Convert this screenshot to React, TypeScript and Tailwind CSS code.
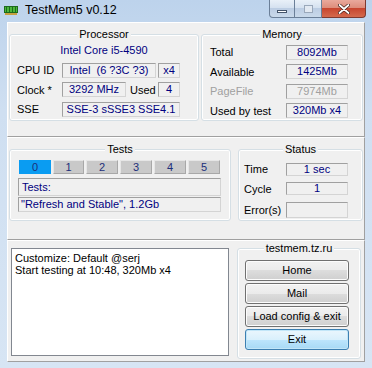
import React from 'react';

const font = { fontFamily: '"Liberation Sans", Arial, sans-serif' };

const Box = ({ w, h = 15, children, dim }: { w: number; h?: number; children?: React.ReactNode; dim?: boolean }) => (
  <div
    className={`flex items-center justify-center border border-t-[#a0a0a0] border-l-[#a0a0a0] border-b-[#d4d4d4] border-r-[#d4d4d4] bg-[#f0f0f0] text-[11px] leading-none ${dim ? 'text-[#a0a0a0]' : 'text-[#000080]'}`}
    style={{ width: w, height: h }}
  >
    {children}
  </div>
);

const Group = ({ title, className, children }: { title: string; className: string; children?: React.ReactNode }) => (
  <div className={`relative rounded-[3px] border border-[#d5dfe5] shadow-[inset_0_0_0_1px_#ffffff] ${className}`}>
    <div className="absolute -top-[8px] left-0 right-0 flex justify-center">
      <span className="bg-[#f0f0f0] px-[2px] text-[11px] leading-[14px] text-black">{title}</span>
    </div>
    {children}
  </div>
);

const WinButton = ({ children, primary }: { children: React.ReactNode; primary?: boolean }) => (
  <div
    className={`flex h-[21px] w-[104px] items-center justify-center rounded-[3px] border text-[11px] text-black ${
      primary
        ? 'border-[#3c7fb1] bg-[linear-gradient(#eaf6fd,#d9f0fc_50%,#bee6fd_50%,#a7d9f5)] shadow-[inset_0_0_0_1px_#c2e6f8]'
        : 'border-[#707070] bg-[linear-gradient(#f2f2f2,#ebebeb_50%,#dddddd_50%,#cfcfcf)] shadow-[inset_0_0_0_1px_#fcfcfc]'
    }`}
  >
    {children}
  </div>
);

const Panel = ({ className, children }: { className: string; children: React.ReactNode }) => (
  <div className={`flex border border-t-white border-l-white border-b-[#a0a0a0] border-r-[#a0a0a0] ${className}`}>{children}</div>
);

export default function App() {
  const tabs = [32, 31, 32, 32, 32, 32];
  return (
    <div className="relative flex h-[368px] w-[372px] flex-col bg-[linear-gradient(#bdd3ec,#cfdff1_30%,#d7e5f4)]" style={font}>
      {/* Title bar */}
      <div className="flex h-[22px] shrink-0 items-start">
        <div className="flex h-[20px] items-center pl-[4px]">
          <svg width="14" height="9" viewBox="0 0 14 9">
            <rect x="0" y="0" width="14" height="7" fill="#1d6b1d" />
            <rect x="1" y="1" width="12" height="5" fill="#4cb83c" />
            <rect x="2" y="1" width="1" height="5" fill="#1d6b1d" />
            <rect x="5" y="1" width="1" height="5" fill="#1d6b1d" />
            <rect x="8" y="1" width="1" height="5" fill="#1d6b1d" />
            <rect x="11" y="1" width="1" height="5" fill="#1d6b1d" />
            <rect x="1" y="7" width="12" height="2" fill="#c8a040" />
          </svg>
          <span className="ml-[7px] text-[12.5px] text-black">TestMem5 v0.12</span>
        </div>
        <div className="ml-auto mr-[6px] flex">
          <div className="flex h-[18px] w-[26px] items-center justify-center rounded-bl-[4px] border border-t-0 border-[#6b7f98] bg-[linear-gradient(#e9f0f8,#d3e0ef_50%,#bccde3_50%,#c9d9ea)]">
            <div className="mt-[5px] h-[3px] w-[10px] border border-[#44546a] bg-white" />
          </div>
          <div className="flex h-[18px] w-[27px] items-center justify-center border border-l-0 border-t-0 border-[#6b7f98] bg-[linear-gradient(#e9f0f8,#d3e0ef_50%,#bccde3_50%,#c9d9ea)]">
            <div className="h-[8px] w-[9px] border border-[#9aa8ba] bg-[#e2e9f2]" />
          </div>
          <div className="flex h-[18px] w-[44px] items-center justify-center rounded-br-[4px] border border-l-0 border-t-0 border-[#7e3a30] bg-[linear-gradient(#e9a99c,#dc8a78_50%,#c8462f_50%,#d46a4d)]">
            <svg width="12" height="10" viewBox="0 0 12 10">
              <path d="M1.5 1 L10.5 9 M10.5 1 L1.5 9" stroke="#3b1a14" strokeWidth="3.2" strokeLinecap="round" />
              <path d="M1.5 1 L10.5 9 M10.5 1 L1.5 9" stroke="#ffffff" strokeWidth="1.8" strokeLinecap="round" />
            </svg>
          </div>
        </div>
      </div>

      {/* Client area */}
      <div className="ml-[7px] flex h-[340px] w-[358px] flex-col bg-[#f0f0f0] text-black">
        {/* Processor / Memory */}
        <Panel className="h-[115px] gap-[2px] pl-[1px] pt-[11px]">
          <Group title="Processor" className="h-[87px] w-[190px]">
            <div className="mt-[8px] text-center text-[11px] leading-[14px] text-[#000080]">Intel Core i5-4590</div>
            <div className="mt-[5px] flex flex-col gap-[3px] pl-[7px] text-[11px]">
              <div className="flex items-center">
                <span className="w-[45px]">CPU ID</span>
                <Box w={94}>Intel&nbsp;&nbsp;(6 ?3C ?3)</Box>
                <div className="w-[2px]" />
                <Box w={22}>x4</Box>
              </div>
              <div className="flex items-center">
                <span className="w-[45px]">Clock *</span>
                <Box w={64}>3292 MHz</Box>
                <span className="w-[32px] pl-[4px]">Used</span>
                <Box w={22}>4</Box>
              </div>
              <div className="flex items-center">
                <span className="w-[45px]">SSE</span>
                <Box w={118}>SSE-3 sSSE3 SSE4.1</Box>
              </div>
            </div>
          </Group>
          <Group title="Memory" className="h-[87px] w-[162px]">
            <div className="mt-[9px] flex flex-col gap-[3px] pl-[8px] text-[11px]">
              <div className="flex items-center">
                <span className="w-[76px]">Total</span>
                <Box w={62}>8092Mb</Box>
              </div>
              <div className="flex items-center">
                <span className="w-[76px]">Available</span>
                <Box w={62}>1425Mb</Box>
              </div>
              <div className="flex items-center">
                <span className="w-[76px] text-[#a0a0a0]">PageFile</span>
                <Box w={62} dim>7974Mb</Box>
              </div>
              <div className="flex items-center">
                <span className="w-[76px]">Used by test</span>
                <Box w={62}>320Mb x4</Box>
              </div>
            </div>
          </Group>
        </Panel>

        {/* Tests / Status */}
        <Panel className="h-[103px] gap-[7px] pl-[1px] pt-[11px]">
          <Group title="Tests" className="h-[72px] w-[222px]">
            <div className="mt-[10px] flex flex-col pl-[8px]">
              <div className="ml-[1px] flex gap-[2px]">
                {tabs.map((w, i) => (
                  <div
                    key={i}
                    className={`flex h-[14px] items-center justify-center text-[11px] text-[#1c2f7a] ${
                      i === 0 ? 'bg-[#0a9cf2]' : 'border border-t-[#e6e6e6] border-l-[#e6e6e6] border-b-[#a8a8a8] border-r-[#a8a8a8] bg-[#c9c9c9]'
                    }`}
                    style={{ width: w }}
                  >
                    {i}
                  </div>
                ))}
              </div>
              <div className="mt-[4px] flex h-[18px] w-[203px] items-center border border-t-[#a0a0a0] border-l-[#a0a0a0] border-b-[#d4d4d4] border-r-[#d4d4d4] pl-[3px] text-[11px] text-[#000080]">
                Tests:
              </div>
              <div className="mt-[1px] flex h-[15px] w-[203px] items-center border border-t-[#a0a0a0] border-l-[#a0a0a0] border-b-[#d4d4d4] border-r-[#d4d4d4] pl-[2px] text-[11px] text-[#000080]">
                "Refresh and Stable", 1.2Gb
              </div>
            </div>
          </Group>
          <Group title="Status" className="h-[72px] w-[125px]">
            <div className="mt-[11px] flex flex-col pl-[5px] text-[11px]">
              <div className="flex items-center">
                <span className="w-[42px]">Time</span>
                <Box w={62} h={13}>1 sec</Box>
              </div>
              <div className="mt-[3px] flex items-center">
                <span className="w-[42px]">Cycle</span>
                <Box w={62} h={13}>1</Box>
              </div>
              <div className="mt-[5px] flex items-center">
                <span className="w-[42px]">Error(s)</span>
                <Box w={62} h={16} />
              </div>
            </div>
          </Group>
        </Panel>

        {/* Log / Links */}
        <Panel className="h-[122px] gap-[8px] pl-[3px] pt-[7px]">
          <div className="h-[108px] w-[218px] border border-[#828790] bg-white px-[3px] pt-[3px] text-[11px] leading-[12px] text-black">
            <div>Customize: Default @serj</div>
            <div>Start testing at 10:48, 320Mb x4</div>
          </div>
          <Group title="testmem.tz.ru" className="h-[111px] w-[124px]">
            <div className="mt-[11px] flex flex-col items-center gap-[2px] pr-[4px]">
              <WinButton>Home</WinButton>
              <WinButton>Mail</WinButton>
              <WinButton>Load config &amp; exit</WinButton>
              <WinButton primary>Exit</WinButton>
            </div>
          </Group>
        </Panel>
      </div>
    </div>
  );
}
